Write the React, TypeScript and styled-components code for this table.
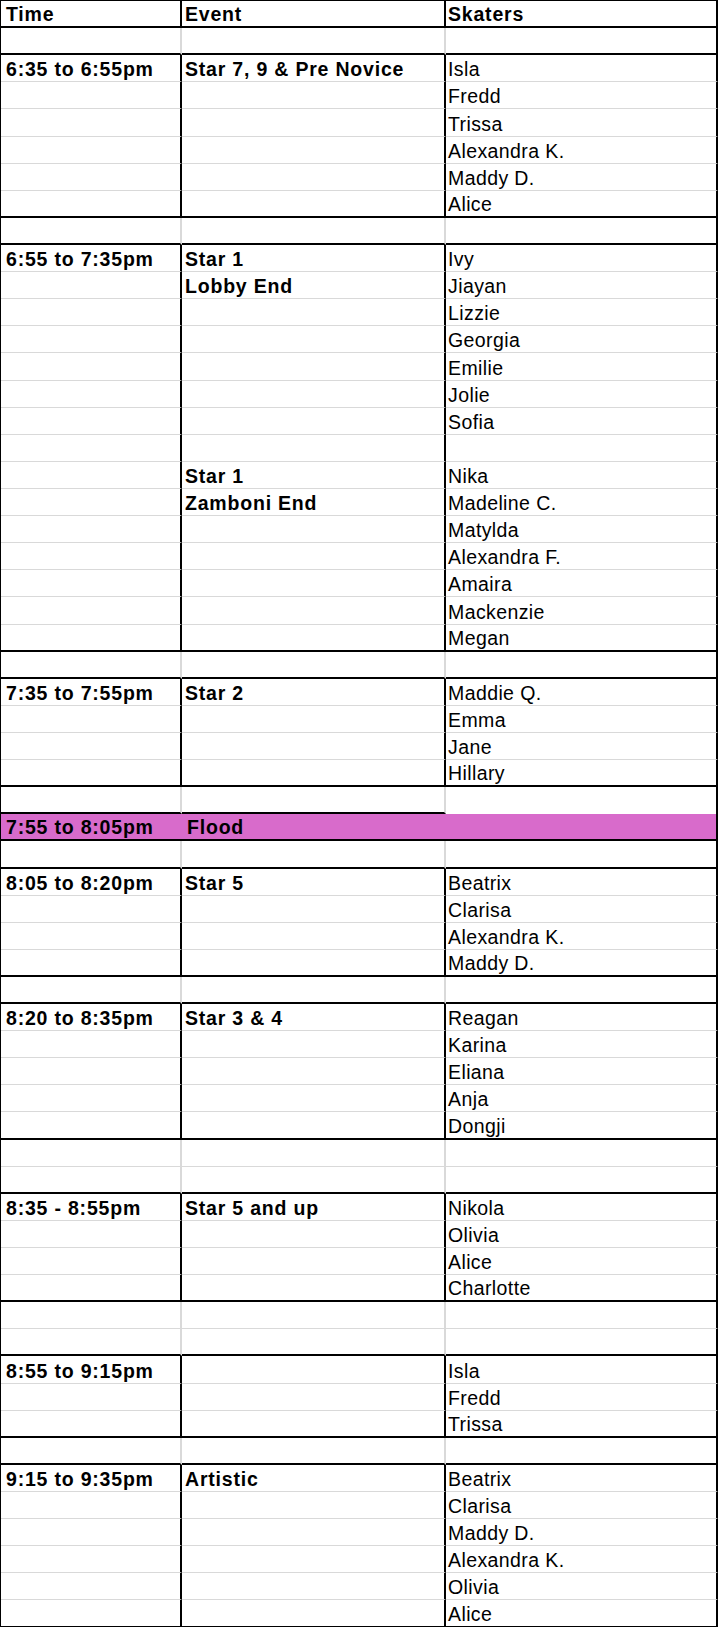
import React from 'react';
import styled, { createGlobalStyle } from 'styled-components';

const GlobalStyle = createGlobalStyle`
  html, body {
    margin: 0;
    padding: 0;
    background: #fff;
  }
  body {
    font-family: 'Liberation Sans', Arial, sans-serif;
    color: #000;
  }
`;

const BLACK = '#000';
const GRAY = '#d9d9d9';
const FLOOD = '#d86bcb';
const ROW_H = 1627 / 60;

type Line = 'black' | 'gray' | 'none';

const lineCss = (line: Line, width: number) =>
  line === 'black'
    ? `${width}px solid ${BLACK}`
    : line === 'gray'
    ? `1px solid ${GRAY}`
    : `0 solid transparent`;

const Sheet = styled.div`
  width: 718px;
  box-sizing: border-box;
  border-top: 1px solid ${BLACK};
  border-left: 1px solid ${BLACK};
  display: flex;
  flex-direction: column;
`;

const Row = styled.div<{ $fill?: string }>`
  display: grid;
  grid-template-columns: 181px 264px 1fr;
  height: ${ROW_H}px;
  background: ${({ $fill }) => $fill || 'transparent'};
`;

const Cell = styled.div<{
  $right: Line;
  $bottom: Line;
  $bold?: boolean;
  $pad: number;
  $rightGrayWide?: boolean;
}>`
  box-sizing: border-box;
  display: flex;
  align-items: flex-end;
  padding: 0 0 0 ${({ $pad }) => $pad}px;
  border-right: ${({ $right, $rightGrayWide }) =>
    $right === 'gray' && $rightGrayWide ? `2px solid ${GRAY}` : lineCss($right, 2)};
  border-bottom: ${({ $bottom }) => lineCss($bottom, 2)};
  font-size: 19.5px;
  font-weight: ${({ $bold }) => ($bold ? 700 : 400)};
  letter-spacing: ${({ $bold }) => ($bold ? '0.8px' : '0.4px')};
  white-space: nowrap;
`;

type Group = { time: string; events: string[]; skaters: string[] };

type RowSpec =
  | { kind: 'header' }
  | { kind: 'blank' }
  | { kind: 'flood' }
  | { kind: 'item'; time: string; event: string; skater: string; last: boolean };

const g = (time: string, events: string[], skaters: string[]): Group => ({ time, events, skaters });

const layout: (Group | 'blank' | 'flood')[] = [
  'blank',
  g('6:35 to 6:55pm', ['Star 7, 9 & Pre Novice'], ['Isla', 'Fredd', 'Trissa', 'Alexandra K.', 'Maddy D.', 'Alice']),
  'blank',
  g(
    '6:55 to 7:35pm',
    ['Star 1', 'Lobby End', '', '', '', '', '', '', 'Star 1', 'Zamboni End'],
    ['Ivy', 'Jiayan', 'Lizzie', 'Georgia', 'Emilie', 'Jolie', 'Sofia', '', 'Nika', 'Madeline C.', 'Matylda', 'Alexandra F.', 'Amaira', 'Mackenzie', 'Megan']
  ),
  'blank',
  g('7:35 to 7:55pm', ['Star 2'], ['Maddie Q.', 'Emma', 'Jane', 'Hillary']),
  'blank',
  'flood',
  'blank',
  g('8:05 to 8:20pm', ['Star 5'], ['Beatrix', 'Clarisa', 'Alexandra K.', 'Maddy D.']),
  'blank',
  g('8:20 to 8:35pm', ['Star 3 & 4'], ['Reagan', 'Karina', 'Eliana', 'Anja', 'Dongji']),
  'blank',
  'blank',
  g('8:35 - 8:55pm', ['Star 5 and up'], ['Nikola', 'Olivia', 'Alice', 'Charlotte']),
  'blank',
  'blank',
  g('8:55 to 9:15pm', [], ['Isla', 'Fredd', 'Trissa']),
  'blank',
  g('9:15 to 9:35pm', ['Artistic'], ['Beatrix', 'Clarisa', 'Maddy D.', 'Alexandra K.', 'Olivia', 'Alice']),
];

const rows: RowSpec[] = [{ kind: 'header' }];
layout.forEach((entry) => {
  if (entry === 'blank' || entry === 'flood') {
    rows.push({ kind: entry });
    return;
  }
  entry.skaters.forEach((s, i) => {
    rows.push({
      kind: 'item',
      time: i === 0 ? entry.time : '',
      event: entry.events[i] || '',
      skater: s,
      last: i === entry.skaters.length - 1,
    });
  });
});

const pads = [5, 3, 2];

function renderRow(row: RowSpec, next: RowSpec | undefined, key: number) {
  const nextIsGroupStart = next?.kind === 'item' && next.time !== '';

  if (row.kind === 'header') {
    return (
      <Row key={key}>
        {['Time', 'Event', 'Skaters'].map((t, i) => (
          <Cell key={t} $right="black" $bottom="black" $bold $pad={pads[i]}>
            {t}
          </Cell>
        ))}
      </Row>
    );
  }

  if (row.kind === 'flood') {
    return (
      <Row key={key} $fill={FLOOD}>
        <Cell $right="none" $bottom="black" $bold $pad={pads[0]}>
          7:55 to 8:05pm
        </Cell>
        <Cell $right="none" $bottom="black" $bold $pad={pads[1] + 2}>
          Flood
        </Cell>
        <Cell $right="black" $bottom="black" $pad={pads[2]} />
      </Row>
    );
  }

  if (row.kind === 'blank') {
    const bottomFor = (col: number): Line => {
      if (nextIsGroupStart) return 'black';
      if (next?.kind === 'flood') return col < 2 ? 'black' : 'none';
      if (!next) return 'none';
      return 'gray';
    };
    return (
      <Row key={key}>
        <Cell $right="gray" $rightGrayWide $bottom={bottomFor(0)} $pad={pads[0]} />
        <Cell $right="gray" $rightGrayWide $bottom={bottomFor(1)} $pad={pads[1]} />
        <Cell $right="black" $bottom={bottomFor(2)} $pad={pads[2]} />
      </Row>
    );
  }

  const bottom: Line = row.last ? 'black' : 'gray';
  return (
    <Row key={key}>
      <Cell $right="black" $bottom={bottom} $bold $pad={pads[0]}>
        {row.time}
      </Cell>
      <Cell $right="black" $bottom={bottom} $bold $pad={pads[1]}>
        {row.event}
      </Cell>
      <Cell $right="black" $bottom={bottom} $pad={pads[2]}>
        {row.skater}
      </Cell>
    </Row>
  );
}

export default function App() {
  return (
    <>
      <GlobalStyle />
      <Sheet>{rows.map((r, i) => renderRow(r, rows[i + 1], i))}</Sheet>
    </>
  );
}
